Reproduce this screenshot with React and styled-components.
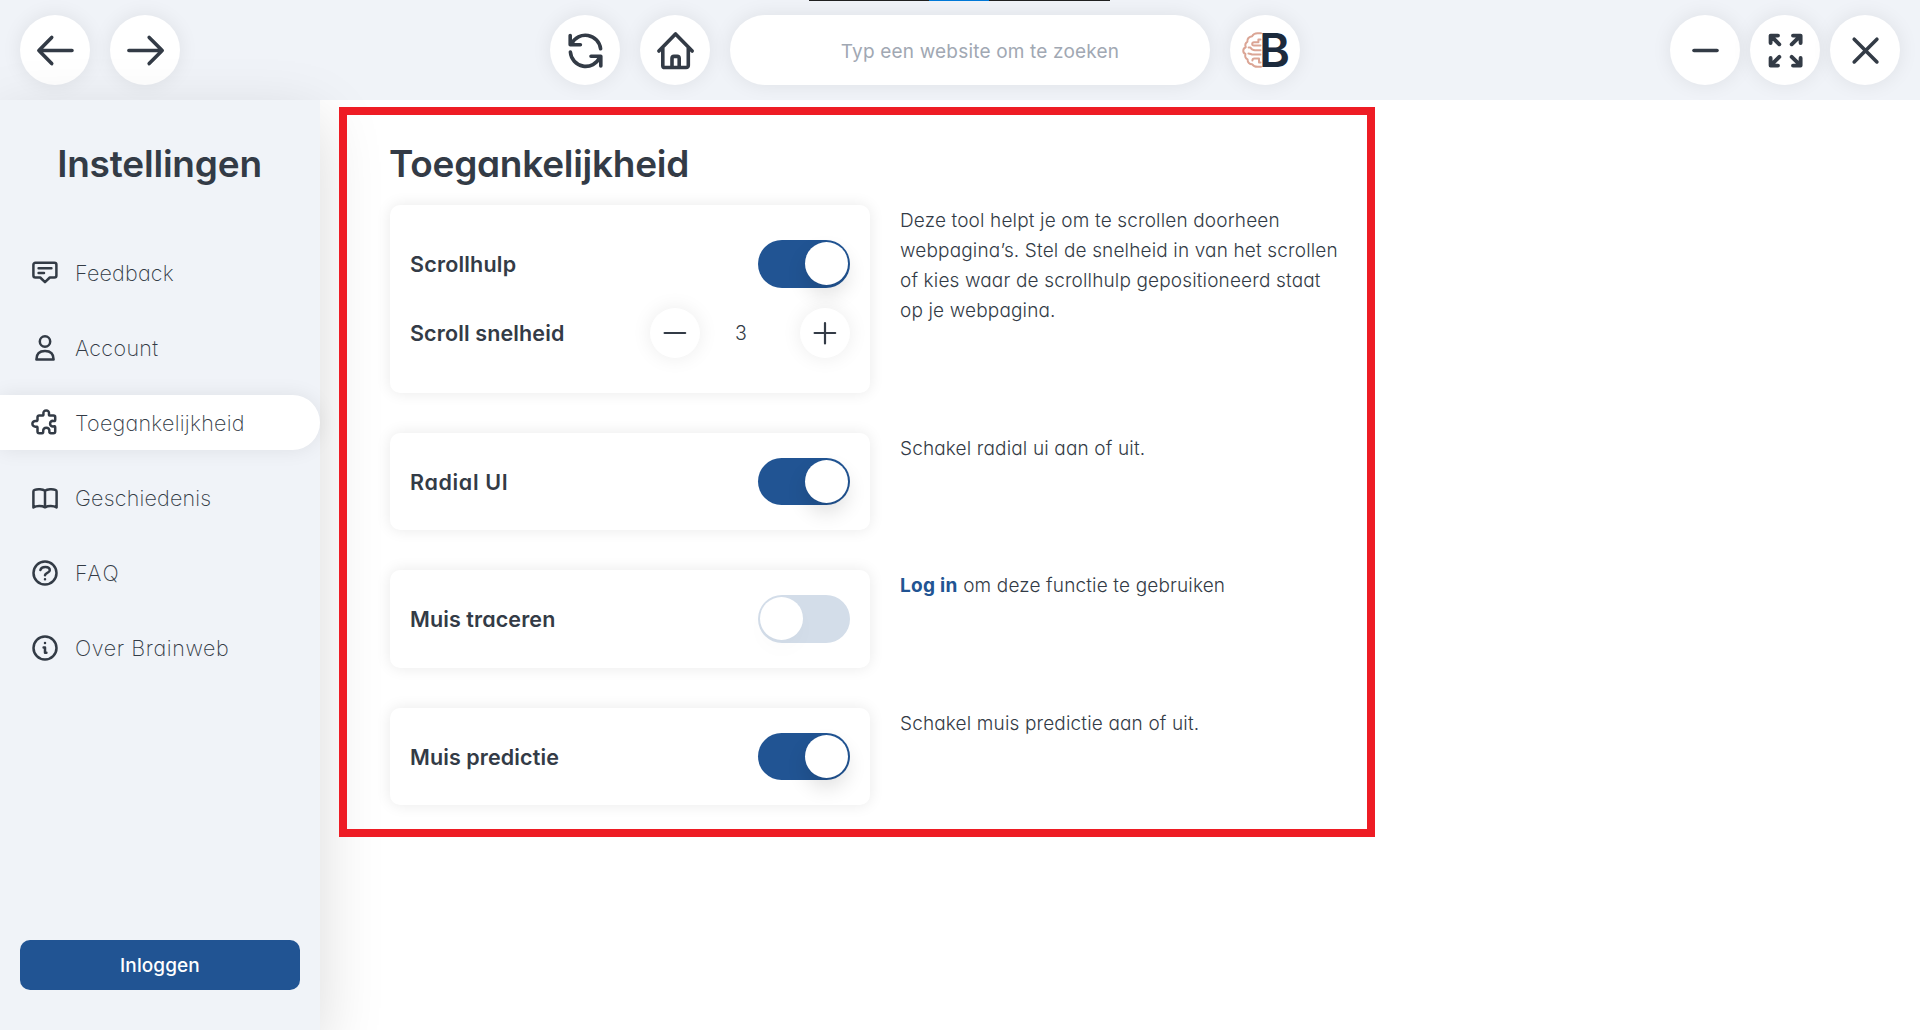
import React, { useState } from "react";
import styled, { createGlobalStyle, css } from "styled-components";

const color = {
  ink: "#333b46",
  panel: "#f0f3f8",
  blue: "#215493",
  off: "#d3dde9",
  placeholder: "#a1a8b3",
  red: "#ee1c24",
};

const GlobalStyle = createGlobalStyle`
  *, *::before, *::after { box-sizing: border-box; }
  body {
    margin: 0;
    background: #fff;
    color: ${color.ink};
    font-family: Inter, Lato, sans-serif;
    font-feature-settings: "cv11";
    overflow: hidden;
  }
  button, input { font: inherit; color: inherit; border: 0; padding: 0; font-feature-settings: inherit; }
  button { cursor: pointer; }
`;

const Page = styled.div`
  position: relative;
  display: flex;
  flex-direction: column;
  height: 1030px;
  overflow: hidden;
`;

/* ---------- top bar ---------- */

const TopBar = styled.header`
  display: grid;
  grid-template-columns: 1fr auto 1fr;
  align-items: center;
  height: 100px;
  flex: none;
  padding: 0 20px;
  background: ${color.panel};
`;

const Group = styled.div`
  display: flex;
  gap: ${(p) => p.$gap}px;
  justify-content: ${(p) => p.$align || "flex-start"};
  ${(p) => p.$shift && css`padding-right: ${p.$shift}px;`}
`;

const RoundButton = styled.button`
  display: grid;
  place-items: center;
  flex: none;
  width: ${(p) => p.$size || 70}px;
  height: ${(p) => p.$size || 70}px;
  border-radius: 50%;
  background: #fff;
  box-shadow: 0 0 20px rgba(0, 0, 0, ${(p) => p.$shade || 0.08});
`;

const Glyph = styled.svg`
  display: block;
  flex: none;
  width: ${(p) => p.$size}px;
  height: ${(p) => p.$size}px;
  fill: none;
  stroke: ${color.ink};
  stroke-width: ${(p) => p.$weight};
  stroke-linecap: round;
  stroke-linejoin: round;
`;

const SearchInput = styled.input`
  width: 480px;
  height: 70px;
  border-radius: 35px;
  background: #fff;
  box-shadow: 0 0 20px rgba(0, 0, 0, 0.08);
  text-align: center;
  font-size: 19px;
  letter-spacing: 0.18px;
  padding: 2px 0 0 20px;
  outline: 0;
  &::placeholder { color: ${color.placeholder}; opacity: 1; }
`;

const Logo = styled.span`
  display: flex;
  align-items: center;
  width: 46px;
  height: 36px;
`;

const Brain = styled.svg`
  flex: none;
  width: 20px;
  height: 36px;
  fill: none;
  stroke: #dba595;
  stroke-width: 2;
  stroke-linecap: round;
  stroke-linejoin: round;
`;

const LogoLetter = styled.span`
  width: 26px;
  margin-left: -3px;
  font-size: 47px;
  line-height: 36px;
  font-weight: 600;
  color: #1c2a3c;
  text-align: left;
`;

/* ---------- sidebar ---------- */

const Body = styled.div`
  display: flex;
  flex: 1;
  min-height: 0;
`;

const Sidebar = styled.aside`
  display: flex;
  flex-direction: column;
  flex: none;
  width: 320px;
  padding-bottom: 40px;
  background: ${color.panel};
  box-shadow: 0 20px 60px rgba(0, 0, 0, 0.15);
`;

const Heading = styled.h1`
  margin: 0 0 0 -1px;
  font-size: 37px;
  line-height: 48px;
  font-weight: 600;
  letter-spacing: ${(p) => p.$tracking}px;
`;

const SideTitle = styled.div`
  padding: 40px 0 0;
  text-align: center;
`;

const Menu = styled.nav`
  display: flex;
  flex-direction: column;
  gap: 20px;
  margin-top: 57px;
`;

const MenuItem = styled.a`
  display: flex;
  align-items: center;
  gap: 15px;
  height: 55px;
  padding-left: 30px;
  border-radius: 0 27.5px 27.5px 0;
  font-size: 21.5px;
  font-weight: 200;
  letter-spacing: ${(p) => p.$tracking}px;
  ${(p) =>
    p.$active &&
    css`
      background: #fff;
      box-shadow: 0 0 20px rgba(0, 0, 0, 0.08);
    `}
`;

const LoginButton = styled.button`
  height: 50px;
  margin: auto 20px 0;
  border-radius: 10px;
  background: ${color.blue};
  color: #fff;
  font-size: 19px;
  font-weight: 500;
  letter-spacing: 0.1px;
`;

/* ---------- settings ---------- */

const Content = styled.main`
  flex: 1;
  padding: 40px 0 0 70px;
`;

const Settings = styled.div`
  display: grid;
  grid-template-columns: 480px 450px;
  column-gap: 30px;
  row-gap: 40px;
  margin-top: 17px;
`;

const Card = styled.section`
  display: flex;
  flex-direction: column;
  gap: 20px;
  padding: ${(p) => (p.$tall ? 35 : 25)}px 20px;
  border-radius: 10px;
  background: #fff;
  box-shadow: 0 0 15px rgba(0, 0, 0, 0.09);
`;

const CardRow = styled.div`
  display: flex;
  align-items: center;
  justify-content: space-between;
`;

const Label = styled.span`
  padding-top: 1px;
  font-size: 21.5px;
  font-weight: 600;
  letter-spacing: ${(p) => p.$tracking}px;
`;

const Switch = styled.button`
  display: flex;
  align-items: center;
  justify-content: ${(p) => (p.$on ? "flex-end" : "flex-start")};
  width: 92px;
  height: 47.5px;
  padding: 0 2px;
  border-radius: 24px;
  background: ${(p) => (p.$on ? color.blue : color.off)};
`;

const Knob = styled.span`
  width: 43px;
  height: 43px;
  border-radius: 50%;
  background: #fff;
  box-shadow: 0 10px 20px rgba(0, 0, 0, ${(p) => (p.$on ? 0.12 : 0.02)});
`;

const Stepper = styled.div`
  display: flex;
  align-items: center;
  width: 200px;
`;

const StepValue = styled.span`
  flex: 1;
  padding-right: 18px;
  text-align: center;
  font-size: 19.5px;
  font-weight: 300;
`;

const Description = styled.p`
  margin: 0;
  padding-top: 1px;
  font-size: 19px;
  line-height: 30px;
  font-weight: 300;
  letter-spacing: 0.15px;
  white-space: pre-line;
`;

const LoginLink = styled.a`
  color: ${color.blue};
  font-weight: 700;
  letter-spacing: 0.3px;
`;

/* ---------- overlays ---------- */

const Highlight = styled.div`
  position: absolute;
  left: 339px;
  top: 107px;
  width: 1036px;
  height: 730px;
  border: 8px solid ${color.red};
  pointer-events: none;
`;

const WindowEdge = styled.div`
  position: absolute;
  left: 809px;
  top: 0;
  width: 301px;
  height: 1px;
  background: linear-gradient(90deg, #202020 120px, #0078d7 120px 180px, #202020 180px);
`;

const barIcons = {
  back: <path d="M19.3 35.5H52M31.7 22.4L18.9 35.5L31.7 48.6" />,
  forward: <path d="M18.9 35.5H52M39.2 22.4L52.2 35.5L39.2 48.6" />,
  refresh: (
    <path d="M20.2 20.5V29.7H30.4M21.6 28.6A15.4 15.4 0 0 1 50.6 33.8M50.8 51V41.3H41M49.8 42.3A15.4 15.4 0 0 1 20.4 37" />
  ),
  home: (
    <path d="M18.9 36L35.5 18.9L52.2 36M22.8 33V50.4A2.1 2.1 0 0 0 24.9 52.5H46.2A2.1 2.1 0 0 0 48.3 50.4V33M32 52V43.4A2 2 0 0 1 34 41.4H37.2A2 2 0 0 1 39.2 43.4V52" />
  ),
  minimize: <path d="M24 35.5H47" />,
  expand: (
    <path d="M28 20.6H20.6V28M21 21L29.3 29.3M43 20.6H50.6V28M50.2 21L41.7 29.3M28 50.6H20.6V43M21 50.2L29.3 41.9M43 50.6H50.6V43M50.2 50.2L41.7 41.9" />
  ),
  close: <path d="M24.2 24.2L46.9 46.9M46.9 24.2L24.2 46.9" />,
};

const BarIcon = ({ name, weight = 3.6 }) => (
  <Glyph viewBox="0 0 70 70" $size={70} $weight={weight}>
    {barIcons[name]}
  </Glyph>
);

const menu = [
  {
    label: "Feedback",
    tracking: 0.2,
    icon: (
      <path d="M5.4 4.8H24.4A2 2 0 0 1 26.4 6.8V17.5A2 2 0 0 1 24.4 19.5H19.8L15 24.2L10.2 19.5H5.4A2 2 0 0 1 3.4 17.5V6.8A2 2 0 0 1 5.4 4.8ZM8.6 10.2H21.4M8.6 15H14" />
    ),
  },
  {
    label: "Account",
    tracking: 0.35,
    icon: (
      <>
        <circle cx="15" cy="8.5" r="5.2" />
        <path d="M6.4 26.4C6.4 21 9.6 17.9 15 17.9S23.6 21 23.6 26.4Z" />
      </>
    ),
  },
  {
    label: "Toegankelijkheid",
    tracking: 0.26,
    active: true,
    icon: (
      <path d="M9.2 7.6H12.6C13.6 7.6 13.5 6.5 13.4 5.6C13.2 3.6 14.5 2.4 16.2 2.4S19.2 3.6 19 5.6C18.9 6.5 18.8 7.6 19.8 7.6H23.6A1.6 1.6 0 0 1 25.2 9.2V12C25.2 13.3 24.4 13.1 23.2 12.9C21.5 12.7 20.1 13.9 20.1 15.7S21.5 18.6 23.2 18.4C24.4 18.2 25.2 18.1 25.2 19.3V23.4A1.8 1.8 0 0 1 23.4 25.2H20.6C19.4 25.2 19.3 24.3 19.4 23.1C19.5 21.2 18.3 19.7 16.3 19.7S13.1 21.2 13.2 23.1C13.3 24.3 13.1 25.2 12 25.2H9.3A1.8 1.8 0 0 1 7.5 23.4V19.7C7.5 18.6 6.6 18.6 5.6 18.7C3.8 18.8 2.4 17.4 2.4 15.8S3.8 12.9 5.6 13C6.6 13.1 7.5 13.1 7.5 12V9.2A1.6 1.6 0 0 1 9.2 7.6Z" />
    ),
  },
  {
    label: "Geschiedenis",
    tracking: 0.18,
    icon: (
      <path d="M15 7.8C12.6 6 7.4 5.7 4.6 6.9C3.8 7.2 3.4 7.7 3.4 8.6V24.4C6.4 22.6 12 22.6 15 24.3C18 22.6 23.6 22.6 26.6 24.4V8.6C26.6 7.7 26.2 7.2 25.4 6.9C22.6 5.7 17.4 6 15 7.8ZM15 7.8V24" />
    ),
  },
  {
    label: "FAQ",
    tracking: 1.6,
    icon: (
      <>
        <circle cx="15" cy="15" r="11.5" />
        <path d="M10.4 12C11.4 7.8 19.8 7.9 19.8 12.2C19.8 15.2 15.4 14.6 15 17.2M15 21.2V21.3" />
      </>
    ),
  },
  {
    label: "Over Brainweb",
    tracking: 0.6,
    icon: (
      <>
        <circle cx="15" cy="15" r="11.5" />
        <path d="M13.6 14.6H15V19.8H16.4M15 10V10.1" />
      </>
    ),
  },
];

const Toggle = ({ initial = true }) => {
  const [on, setOn] = useState(initial);
  return (
    <Switch type="button" role="switch" aria-checked={on} $on={on} onClick={() => setOn(!on)}>
      <Knob $on={on} />
    </Switch>
  );
};

const SpeedStepper = () => {
  const [speed, setSpeed] = useState(3);
  return (
    <Stepper>
      <RoundButton type="button" $size={50} $shade={0.08} onClick={() => setSpeed(speed - 1)}>
        <Glyph viewBox="0 0 50 50" $size={50} $weight={2.2}>
          <path d="M14.6 25H35.2" />
        </Glyph>
      </RoundButton>
      <StepValue>{speed}</StepValue>
      <RoundButton type="button" $size={50} $shade={0.08} onClick={() => setSpeed(speed + 1)}>
        <Glyph viewBox="0 0 50 50" $size={50} $weight={2.2}>
          <path d="M14.6 25H35.2M25 15V35.4" />
        </Glyph>
      </RoundButton>
    </Stepper>
  );
};

export default function App() {
  return (
    <Page>
      <GlobalStyle />
      <TopBar>
        <Group $gap={20}>
          <RoundButton type="button"><BarIcon name="back" /></RoundButton>
          <RoundButton type="button"><BarIcon name="forward" /></RoundButton>
        </Group>
        <Group $gap={20} $shift={70}>
          <RoundButton type="button"><BarIcon name="refresh" /></RoundButton>
          <RoundButton type="button"><BarIcon name="home" /></RoundButton>
          <SearchInput placeholder="Typ een website om te zoeken" />
          <RoundButton type="button">
            <Logo>
              <Brain viewBox="0 0 20 36">
                <path d="M19 1.2H15.5C12.8 1.2 11 2.4 10.2 4.2C7 4.6 5 6.8 5.4 9.6C3.4 11 3 13.4 3.8 15.2C.6 16.4.4 20.6 3.4 22C2.8 24.6 3.8 26.6 5.6 27.4C5.4 30.4 7.6 32.2 10.2 32.2C11.2 34 13 34.8 15.5 34.8H19" />
                <path d="M18.5 7.4H16.4V10.2H12C9.8 10.2 9.4 13.4 12 13.6H18.5M6.6 15.4H8.4C9.6 18.4 12 18.4 18.5 18.2M6.4 21.4C8.4 21.4 9 22.6 11 22.6H18.5M18.5 30.4H17V26.6H12.4C10.8 26.6 10.4 27.4 10.4 28.6" />
              </Brain>
              <LogoLetter>B</LogoLetter>
            </Logo>
          </RoundButton>
        </Group>
        <Group $gap={10} $align="flex-end">
          <RoundButton type="button"><BarIcon name="minimize" /></RoundButton>
          <RoundButton type="button"><BarIcon name="expand" weight={3.9} /></RoundButton>
          <RoundButton type="button"><BarIcon name="close" /></RoundButton>
        </Group>
      </TopBar>
      <Body>
        <Sidebar>
          <SideTitle>
            <Heading $tracking={-0.2}>Instellingen</Heading>
          </SideTitle>
          <Menu>
            {menu.map((item) => (
              <MenuItem key={item.label} $active={item.active} $tracking={item.tracking}>
                <Glyph viewBox="0 0 30 30" $size={30} $weight={2.5}>{item.icon}</Glyph>
                {item.label}
              </MenuItem>
            ))}
          </Menu>
          <LoginButton type="button">Inloggen</LoginButton>
        </Sidebar>
        <Content>
          <Heading $tracking={-0.27}>Toegankelijkheid</Heading>
          <Settings>
            <Card $tall>
              <CardRow>
                <Label $tracking={0.2}>Scrollhulp</Label>
                <Toggle />
              </CardRow>
              <CardRow>
                <Label $tracking={0.13}>Scroll snelheid</Label>
                <SpeedStepper />
              </CardRow>
            </Card>
            <Description>
              {"Deze tool helpt je om te scrollen doorheen\nwebpagina’s. Stel de snelheid in van het scrollen\nof kies waar de scrollhulp gepositioneerd staat\nop je webpagina."}
            </Description>
            <Card>
              <CardRow>
                <Label $tracking={0.65}>Radial UI</Label>
                <Toggle />
              </CardRow>
            </Card>
            <Description>Schakel radial ui aan of uit.</Description>
            <Card>
              <CardRow>
                <Label $tracking={0.1}>Muis traceren</Label>
                <Toggle initial={false} />
              </CardRow>
            </Card>
            <Description>
              <LoginLink>Log in</LoginLink> om deze functie te gebruiken
            </Description>
            <Card>
              <CardRow>
                <Label $tracking={0.1}>Muis predictie</Label>
                <Toggle />
              </CardRow>
            </Card>
            <Description>Schakel muis predictie aan of uit.</Description>
          </Settings>
        </Content>
      </Body>
      <Highlight />
      <WindowEdge />
    </Page>
  );
}
